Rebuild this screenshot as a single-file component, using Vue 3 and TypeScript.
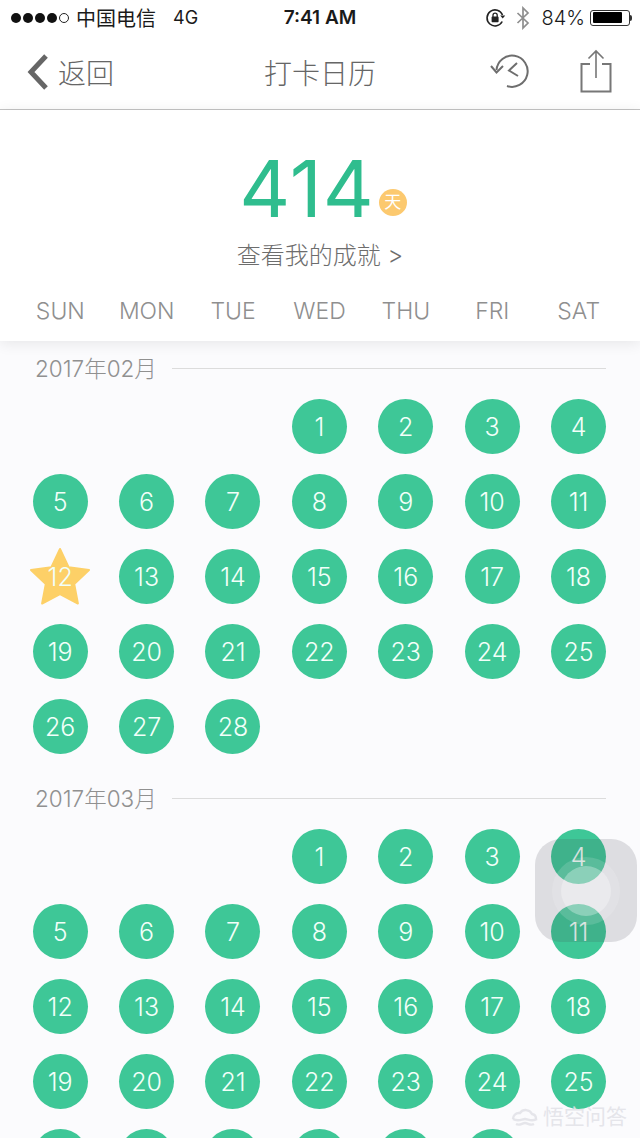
<script setup lang="ts">
interface Month {
  label: string
  offset: number
  days: number
}

const weekdays: string[] = ['SUN', 'MON', 'TUE', 'WED', 'THU', 'FRI', 'SAT']
const months: Month[] = [
  { label: '2017年02月', offset: 3, days: 28 },
  { label: '2017年03月', offset: 3, days: 31 }
]

function dayList(n: number): number[] {
  return Array.from({ length: n }, (_, i) => i + 1)
}
function isStar(mi: number, d: number): boolean {
  return mi === 0 && d === 12
}
</script>

<template>
  <div class="screen">
    <div class="status">
      <div class="status-left">
        <div class="signal">
          <i class="dot"></i><i class="dot"></i><i class="dot"></i><i class="dot"></i><i class="dot empty"></i>
        </div>
        <span class="carrier">中国电信</span>
        <span class="net">4G</span>
      </div>
      <div class="time">7:41 AM</div>
      <div class="status-right">
        <svg class="lock" width="22" height="20" viewBox="0 0 22 20">
          <path d="M17.2 13.5A8 8 0 1 1 17.5 7" fill="none" stroke="#222" stroke-width="1.6" />
          <path d="M15.2 7.6h5l-2.5 3z" fill="#222" />
          <rect x="6.6" y="8.6" width="7" height="5.6" rx="0.8" fill="#222" />
          <path d="M8 9V7.2a2.1 2.1 0 0 1 4.2 0V9" fill="none" stroke="#222" stroke-width="1.3" />
        </svg>
        <svg class="bt" width="14" height="24" viewBox="0 0 14 24">
          <path d="M1.5 7l10.5 10-5 5V2l5 5L1.5 17" fill="none" stroke="#8e8e8e" stroke-width="1.7" />
        </svg>
        <span class="pct">84%</span>
        <div class="battery">
          <div class="cell"><div class="fill"></div></div>
          <div class="nub"></div>
        </div>
      </div>
    </div>

    <div class="nav">
      <div class="back">
        <svg width="24" height="38" viewBox="0 0 24 38">
          <path d="M20 3L5 19l15 16" fill="none" stroke="#666" stroke-width="5" />
        </svg>
        <span>返回</span>
      </div>
      <div class="title">打卡日历</div>
      <div class="actions">
        <svg class="history" width="40" height="36" viewBox="0 0 40 36">
          <path d="M6.5 17A15.6 15.6 0 1 1 17 33" fill="none" stroke="#6e6e6e" stroke-width="2" />
          <path d="M1 13l5.5 6.5L13 13" fill="none" stroke="#6e6e6e" stroke-width="2" />
          <path d="M27 10l-8 7.5 9 5.5" fill="none" stroke="#6e6e6e" stroke-width="2" />
        </svg>
        <svg class="share" width="32" height="44" viewBox="0 0 32 44">
          <path d="M10 15H1.5v27.5h29V15H22" fill="none" stroke="#777" stroke-width="2" />
          <path d="M16 2v27M8.5 9.5L16 2l7.5 7.5" fill="none" stroke="#777" stroke-width="1.6" />
        </svg>
      </div>
    </div>

    <div class="summary">
      <div class="count">
        <span class="num">414</span>
        <span class="unit">天</span>
      </div>
      <div class="achieve">查看我的成就 &gt;</div>
      <div class="weekdays">
        <span v-for="w in weekdays" :key="w">{{ w }}</span>
      </div>
    </div>

    <div class="calendar">
      <section v-for="(m, mi) in months" :key="m.label" class="month">
        <div class="month-head">
          <span class="month-label">{{ m.label }}</span>
          <span class="rule"></span>
        </div>
        <div class="grid">
          <span v-for="b in m.offset" :key="'b' + b" class="blank"></span>
          <div v-for="d in dayList(m.days)" :key="d" class="cell-day">
            <div class="day" :class="{ starred: isStar(mi, d) }">
              <svg v-if="isStar(mi, d)" class="star" width="62" height="58" viewBox="0 0 62 58">
                <path
                  d="M31 2L39.6 20.2 60 23 45.2 37 48.9 56.5 31 47 13.1 56.5 16.8 37 2 23 22.4 20.2Z"
                  fill="#fdd067"
                  stroke="#fdd067"
                  stroke-width="2"
                  stroke-linejoin="round"
                />
              </svg>
              <span class="day-num">{{ d }}</span>
            </div>
          </div>
        </div>
      </section>
    </div>

    <div class="assist">
      <div class="ring"><div class="ring-in"></div></div>
    </div>

    <div class="mark">
      <svg width="30" height="22" viewBox="0 0 30 22">
        <path d="M3 13a6 6 0 0 1 6-6h1a7 7 0 0 1 12 1 5 5 0 0 1 4 5" fill="none" stroke="rgba(226,226,232,.9)" stroke-width="2.4" />
        <path d="M3 13c5 3 9 0 12 0s7 3 12 0M6 18c4 2 6-1 9-1s5 3 9 1" fill="none" stroke="rgba(226,226,232,.9)" stroke-width="2.4" />
      </svg>
      <span>悟空问答</span>
    </div>
  </div>
</template>

<style>
html, body { margin: 0; padding: 0; background: #fff; }
</style>

<style scoped>
.screen {
  position: relative;
  width: 640px;
  height: 1138px;
  overflow: hidden;
  background: #fbfbfd;
  font-family: Inter, "Noto Sans CJK SC", sans-serif;
  color: #666;
}
.status {
  height: 35px;
  background: #fff;
  display: grid;
  grid-template-columns: 1fr auto 1fr;
  align-items: center;
  color: #1a1a1a;
  font-size: 19px;
}
.status-left { display: flex; align-items: center; padding-left: 11px; }
.signal { display: flex; gap: 2px; width: 65px; }
.dot { width: 10px; height: 10px; border-radius: 50%; background: #111; box-sizing: border-box; }
.dot.empty { background: none; border: 1px solid #222; }
.carrier { font-size: 20px; }
.net { margin-left: 17px; font-size: 18px; }
.time { font-size: 19px; font-weight: 600; }
.status-right { display: flex; align-items: center; justify-content: flex-end; padding-right: 8px; }
.bt { margin-left: 9px; }
.pct { margin-left: 11px; font-size: 20px; font-weight: 300; }
.battery { display: flex; align-items: center; margin-left: 5px; }
.cell { width: 40px; height: 16px; border: 1px solid #333; border-radius: 3px; padding: 1.5px; box-sizing: border-box; }
.fill { width: 84%; height: 100%; background: #000; border-radius: 1px; }
.nub { width: 2px; height: 6px; background: #333; border-radius: 0 2px 2px 0; }

.nav {
  height: 74px;
  background: #fff;
  border-bottom: 1px solid #c4c4c4;
  display: grid;
  grid-template-columns: 1fr auto 1fr;
  align-items: center;
  font-size: 28px;
  font-weight: 300;
}
.back { display: flex; align-items: center; gap: 8px; padding-left: 26px; }
.back svg { display: block; }
.title { color: #666; }
.actions { display: flex; align-items: center; justify-content: flex-end; gap: 50px; padding-right: 28px; }
.actions svg { display: block; }
.history { margin-top: -3px; }
.share { margin-top: -2px; }

.summary {
  position: relative;
  z-index: 2;
  height: 231px;
  background: #fff;
  box-shadow: 0 2px 14px rgba(0, 0, 0, 0.09);
  display: flex;
  flex-direction: column;
  align-items: center;
}
.count { display: flex; align-items: flex-end; height: 100px; margin-top: 28px; margin-left: 6px; }
.num { font-size: 79px; line-height: 100px; font-weight: 400; color: #2fbd8e; letter-spacing: 1px; }
.unit {
  width: 28px;
  height: 27px;
  border-radius: 50%;
  background: #fcc96f;
  color: #fff;
  font-size: 17px;
  line-height: 27px;
  text-align: center;
  margin-left: 4px;
  margin-bottom: 22px;
}
.achieve { font-size: 24px; line-height: 32px; font-weight: 300; color: #6d6d6d; margin-top: 2px; margin-left: 0; }
.weekdays {
  display: grid;
  grid-template-columns: repeat(7, 86.4px);
  padding: 0 18px 0 17px;
  margin-top: 24px;
  font-size: 23px;
  line-height: 30px;
  font-weight: 300;
  color: #8f8f8f;
  text-align: center;
}
.calendar { padding-top: 13px; }
.month + .month { margin-top: 30px; }
.month-head { display: flex; align-items: center; height: 29px; margin-bottom: 16px; padding: 0 34px 0 35px; }
.month-label { font-size: 22.5px; font-weight: 300; color: #909090; line-height: 29px; white-space: nowrap; }
.rule { flex: 1; height: 1px; background: #dcdcdc; margin-left: 15px; }
.grid {
  display: grid;
  grid-template-columns: repeat(7, 86.4px);
  row-gap: 20px;
  padding: 0 18px 0 17px;
}
.cell-day { display: flex; justify-content: center; }
.day {
  position: relative;
  width: 55px;
  height: 55px;
  border-radius: 50%;
  background: #3ec797;
  color: #f2fff9;
  font-size: 25px;
  font-weight: 300;
  display: flex;
  align-items: center;
  justify-content: center;
}
.day.starred { background: none; }
.star { position: absolute; left: -3.5px; top: -2px; }
.day-num { position: relative; }

.assist {
  position: absolute;
  left: 535px;
  top: 839px;
  width: 102px;
  height: 103px;
  border-radius: 26px;
  background: rgba(70, 70, 80, 0.16);
  display: flex;
  align-items: center;
  justify-content: center;
}
.ring {
  width: 68px;
  height: 68px;
  border-radius: 50%;
  background: rgba(255, 255, 255, 0.14);
  display: flex;
  align-items: center;
  justify-content: center;
}
.ring-in { width: 50px; height: 50px; border-radius: 50%; background: rgba(255, 255, 255, 0.3); }
.mark {
  position: absolute;
  left: 510px;
  top: 1104px;
  display: flex;
  align-items: center;
  gap: 3px;
  color: rgba(226, 226, 232, 0.9);
  font-size: 21px;
  line-height: 26px;
}
</style>
